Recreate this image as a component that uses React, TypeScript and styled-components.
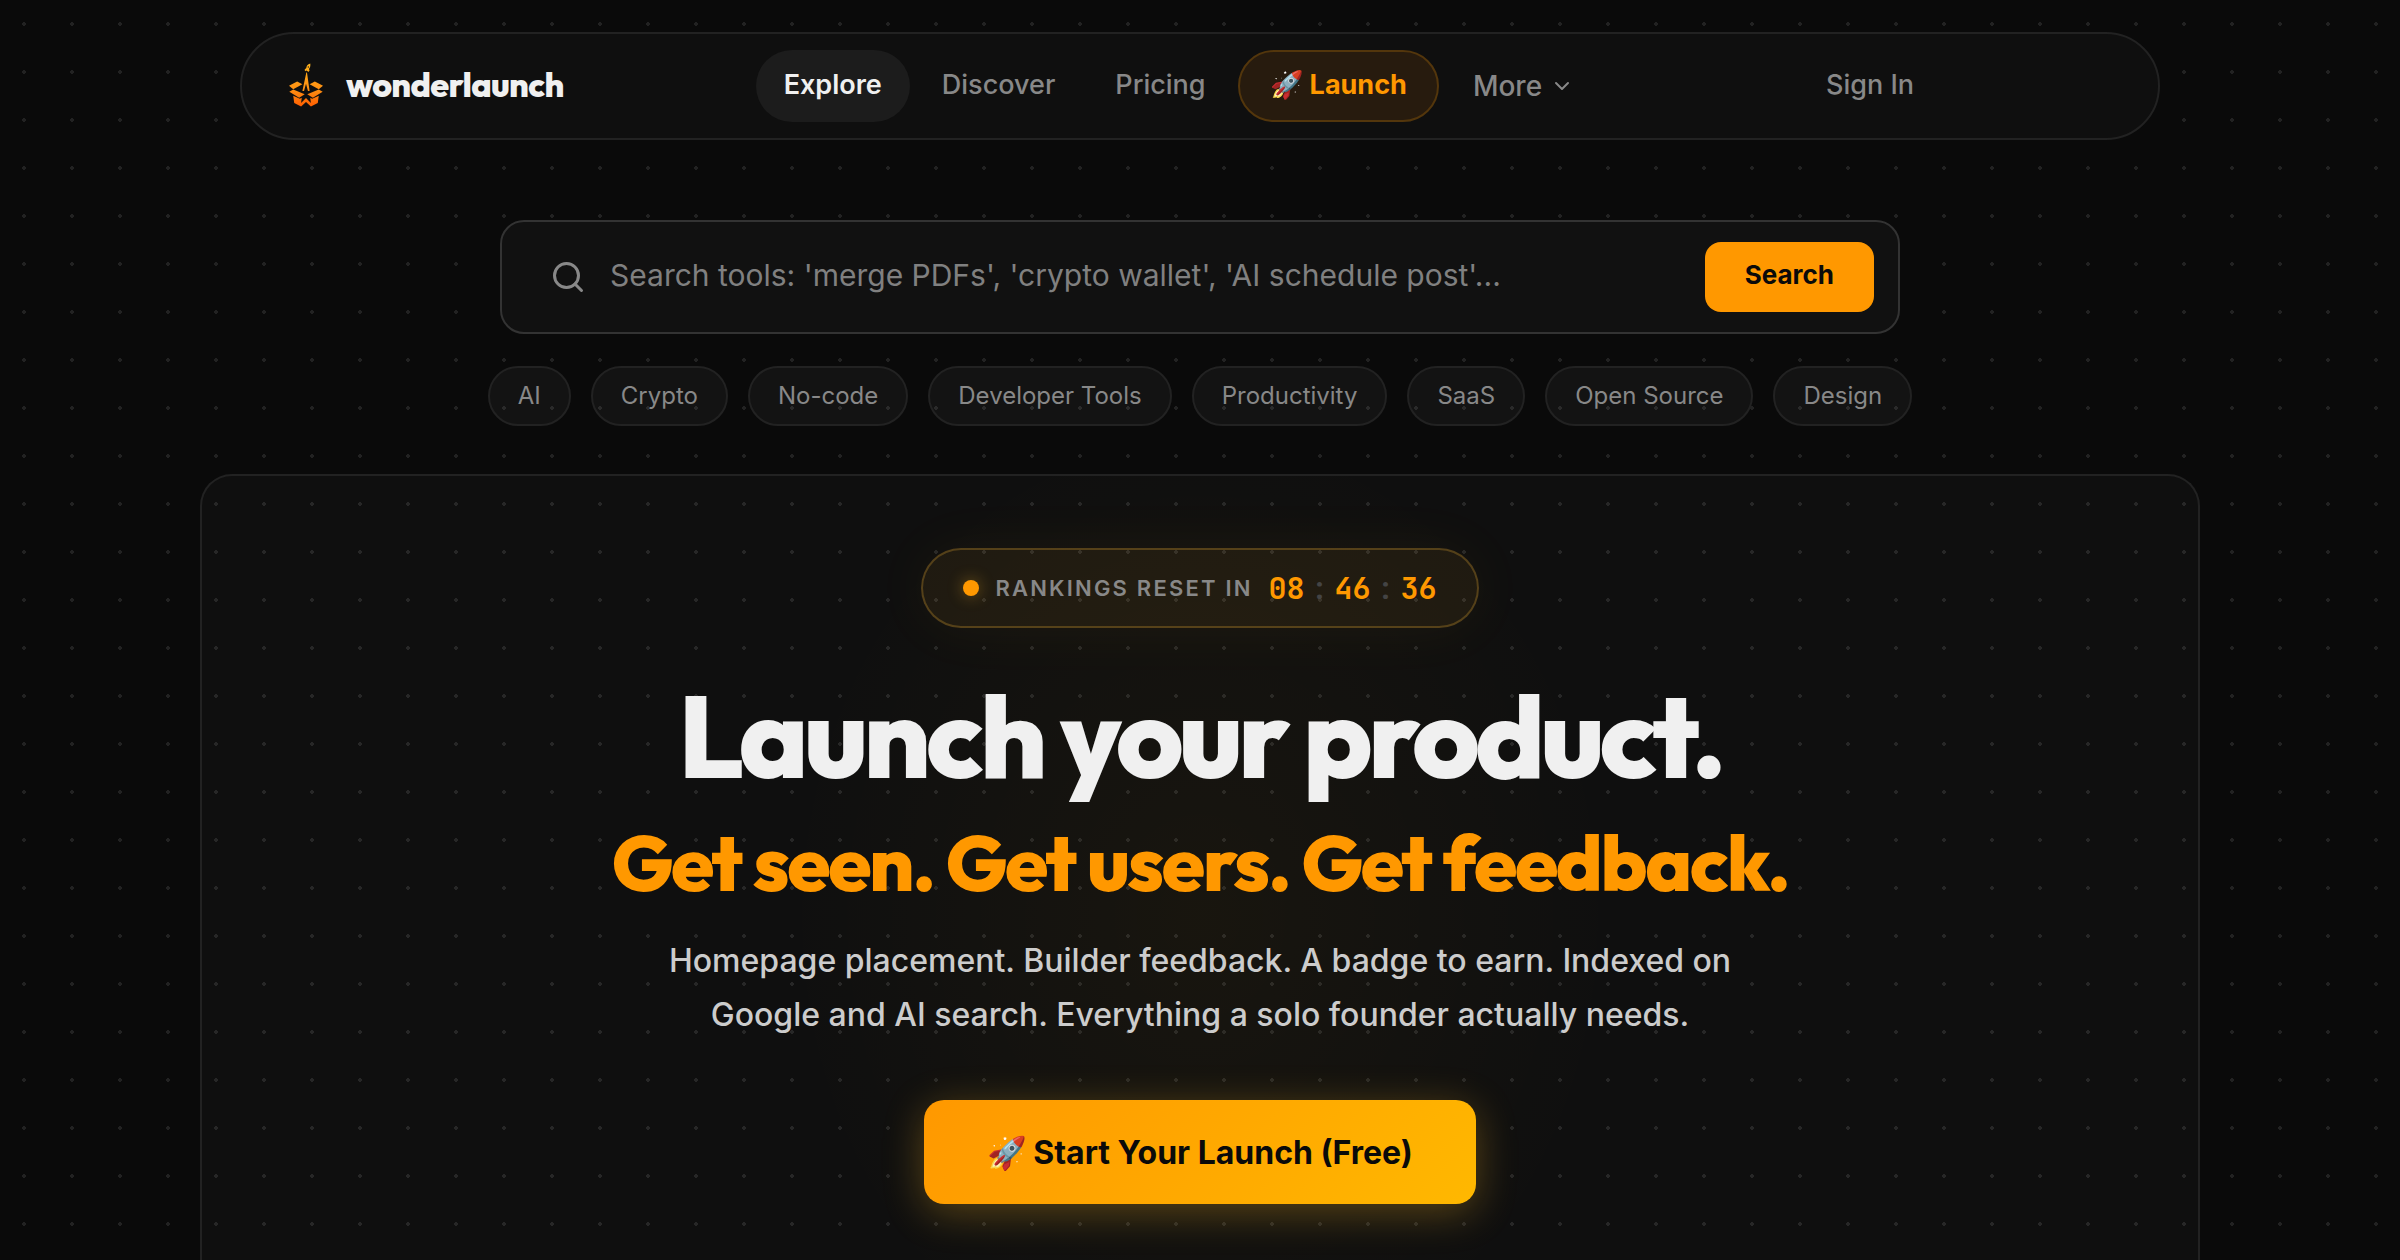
import React from "react";
import styled, { createGlobalStyle, css } from "styled-components";
import { ChevronDown, Search } from "lucide-react";

const sans = `Inter, "Liberation Sans", sans-serif`;
const display = `Outfit, Lato, "Liberation Sans", sans-serif`;
const mono = `"JetBrains Mono", "DejaVu Sans Mono", monospace`;

const GlobalStyle = createGlobalStyle`
  *, *::before, *::after { box-sizing: border-box; }
  html { background: #0a0a0a; }
  body {
    margin: 0;
    min-height: 100vh;
    color: #f0f0f0;
    font-family: ${sans};
    background-color: #0a0a0a;
    background-image: radial-gradient(circle, #222 2px, transparent 2px);
    background-size: 48px 48px;
    overflow: hidden;
  }
  button, input { font: inherit; }
`;

const Page = styled.div`
  height: 100vh;
  padding: 32px 24px 0;
  display: flex;
  flex-direction: column;
  align-items: center;
  overflow: hidden;
`;

const Nav = styled.nav`
  flex: none;
  width: 100%;
  max-width: 1920px;
  height: 108px;
  padding: 0 34px 0 46px;
  display: flex;
  align-items: center;
  justify-content: space-between;
  border: 2px solid #222;
  border-radius: 54px;
  background: #0f0f0f;
`;

const Brand = styled.a`
  padding-bottom: 2px;
  display: flex;
  align-items: center;
  gap: 22px;
  color: #f0f0f0;
  text-decoration: none;
  font: 800 34px/44px ${display};
  letter-spacing: -0.02em;
`;

const NavLinks = styled.div`
  display: flex;
  align-items: center;
  gap: 4px;
`;

const navItem = css`
  height: 72px;
  padding: 0 26px;
  display: flex;
  align-items: center;
  border: 2px solid transparent;
  border-radius: 36px;
  font: 500 27px/40px ${sans};
  color: #888;
  text-decoration: none;
`;

const NavLink = styled.a<{ $tone?: "active" | "launch" }>`
  ${navItem}
  padding-bottom: 2px;
  ${(p) =>
    p.$tone === "active" &&
    css`
      color: #f0f0f0;
      font-weight: 600;
      background: #1c1c1c;
    `}
  ${(p) =>
    p.$tone === "launch" &&
    css`
      padding-left: 30px;
      padding-right: 30px;
      gap: 6px;
      color: #ff9800;
      font-weight: 700;
      background: #271b0e;
      border-color: #53360c;
    `}
`;

const MoreButton = styled.button`
  ${navItem}
  padding: 0 30px 0 28px;
  gap: 8px;
  font-size: 28px;
  background: none;
  cursor: pointer;
`;

const Actions = styled.div`
  width: 326px;
  display: flex;
`;

const SearchForm = styled.form`
  flex: none;
  width: 100%;
  max-width: 1400px;
  height: 114px;
  margin-top: 80px;
  padding: 0 24px 0 48px;
  display: flex;
  align-items: center;
  gap: 24px;
  border: 2px solid #333;
  border-radius: 24px;
  background: #111;
  color: #888;
`;

const SearchInput = styled.input`
  flex: 1;
  min-width: 0;
  height: 72px;
  padding: 0 0 4px;
  border: 0;
  outline: 0;
  background: none;
  color: #f0f0f0;
  font-size: 30px;
  &::placeholder { color: #808080; opacity: 1; }
`;

const SearchButton = styled.button`
  height: 70px;
  padding: 0 40px 6px;
  border: 0;
  border-radius: 16px;
  background: #ff9800;
  color: #0a0a0a;
  font-size: 26px;
  font-weight: 700;
  cursor: pointer;
`;

const Chips = styled.div`
  flex: none;
  margin-top: 32px;
  display: flex;
  justify-content: center;
  gap: 20px;
`;

const Chip = styled.button`
  height: 60px;
  padding: 0 28px 2px;
  border: 2px solid #222;
  border-radius: 30px;
  background: rgba(255, 255, 255, 0.04);
  color: #888;
  font-size: 24px;
  cursor: pointer;
`;

const Hero = styled.main`
  flex: 1 0 auto;
  width: 100%;
  max-width: 2000px;
  margin-top: 48px;
  padding: 72px 40px 96px;
  display: flex;
  flex-direction: column;
  align-items: center;
  border: 2px solid #222;
  border-bottom: 0;
  border-radius: 32px 32px 0 0;
  background:
    radial-gradient(ellipse 420px 500px at 50% 440px, rgba(255, 180, 0, 0.04), transparent),
    rgba(255, 255, 255, 0.024);
  text-align: center;
`;

const Countdown = styled.div`
  height: 80px;
  padding: 0 40px;
  display: flex;
  align-items: center;
  gap: 16px;
  border: 2px solid rgba(255, 190, 50, 0.24);
  border-radius: 40px;
  background: rgba(255, 190, 50, 0.07);
  box-shadow: 0 0 60px rgba(255, 190, 50, 0.05);
`;

const Pulse = styled.span`
  width: 16px;
  height: 16px;
  border-radius: 50%;
  background: #ff9800;
  box-shadow: 0 0 16px rgba(255, 184, 40, 0.4);
`;

const CountdownLabel = styled.span`
  color: #888;
  font-size: 22px;
  font-weight: 600;
  letter-spacing: 0.1em;
`;

const Clock = styled.time`
  display: flex;
  gap: 6px;
  color: #ff9800;
  font: 700 30px/40px ${mono};
`;

const Colon = styled.span`
  color: #444;
  font-weight: 400;
`;

const Title = styled.h1`
  margin: 44px 0 0;
  font: 800 116px/126px ${display};
  letter-spacing: -0.04em;
`;

const Tagline = styled.p`
  margin: 16px 0 0;
  color: #ff9800;
  font: 800 78px/96px ${display};
  letter-spacing: -0.03em;
`;

const Blurb = styled.p`
  max-width: 1120px;
  margin: 24px 0 0;
  color: #ccc;
  font: 500 32px/54px ${sans};
`;

const StartButton = styled.button`
  height: 104px;
  margin-top: 58px;
  padding: 0 63px;
  display: flex;
  align-items: center;
  gap: 6px;
  border: 0;
  border-radius: 20px;
  background: linear-gradient(135deg, #ff9800, #ffb800);
  color: #0a0a0a;
  font-size: 32px;
  font-weight: 700;
  box-shadow: 0 8px 40px rgba(255, 184, 40, 0.3);
  cursor: pointer;
`;

const BrandMark = () => (
  <svg width="36" height="46" viewBox="24 38 110 140" aria-hidden="true">
    <defs>
      <linearGradient id="flame" x1="0" y1="38" x2="0" y2="178" gradientUnits="userSpaceOnUse">
        <stop offset="0" stopColor="#ffb51c" />
        <stop offset="0.6" stopColor="#ff8f12" />
        <stop offset="1" stopColor="#ff5a00" />
      </linearGradient>
    </defs>
    <g fill="url(#flame)">
      <path d="M92 42 C84 44 80 50 80 56 L75 61 L76 66 L80 64 L84 66 L86 68 L90 64 L88 59 C92 54 93 48 92 42 Z" />
      <path d="M80 70 L68 126 L73 126 L79 104 L85 126 L90 126 L82 70 Z" />
      <path d="M27 110 L52 97 L68 106 L40 121 Z" />
      <path d="M131 110 L106 97 L90 106 L118 121 Z" />
      <path d="M28 129 L40 122 L75 136 L58 147 Z" />
      <path d="M130 129 L118 122 L83 136 L100 147 Z" />
      <path d="M40 141 L60 150 L66 147 L64 163 L79 148 L94 163 L92 147 L98 150 L118 141 L115 163 L94 174 L79 160 L64 174 L43 163 Z" />
    </g>
    <circle cx="86" cy="53" r="2" fill="#0f0f0f" />
  </svg>
);

const topics = [
  "AI",
  "Crypto",
  "No-code",
  "Developer Tools",
  "Productivity",
  "SaaS",
  "Open Source",
  "Design",
];

export default function App() {
  return (
    <>
      <GlobalStyle />
      <Page>
        <Nav aria-label="Main">
          <Brand href="#">
            <BrandMark />
            wonderlaunch
          </Brand>
          <NavLinks>
            <NavLink href="#explore" $tone="active">Explore</NavLink>
            <NavLink href="#discover">Discover</NavLink>
            <NavLink href="#pricing">Pricing</NavLink>
            <NavLink href="#launch" $tone="launch"><span>🚀</span>Launch</NavLink>
            <MoreButton type="button">
              More
              <ChevronDown size={24} />
            </MoreButton>
          </NavLinks>
          <Actions>
            <NavLink href="#sign-in">Sign In</NavLink>
          </Actions>
        </Nav>

        <SearchForm role="search" onSubmit={(e) => e.preventDefault()}>
          <Search size={36} aria-hidden="true" />
          <SearchInput
            type="text"
            aria-label="Search tools"
            placeholder="Search tools: 'merge PDFs', 'crypto wallet', 'AI schedule post'..."
          />
          <SearchButton type="submit">Search</SearchButton>
        </SearchForm>

        <Chips>
          {topics.map((topic) => (
            <Chip key={topic} type="button">{topic}</Chip>
          ))}
        </Chips>

        <Hero>
          <Countdown>
            <Pulse />
            <CountdownLabel>RANKINGS RESET IN</CountdownLabel>
            <Clock>
              <span>08</span>
              <Colon>:</Colon>
              <span>46</span>
              <Colon>:</Colon>
              <span>36</span>
            </Clock>
          </Countdown>
          <Title>Launch your product.</Title>
          <Tagline>Get seen. Get users. Get feedback.</Tagline>
          <Blurb>
            Homepage placement. Builder feedback. A badge to earn. Indexed on Google and AI search.
            Everything a solo founder actually needs.
          </Blurb>
          <StartButton type="button"><span>🚀</span>Start Your Launch (Free)</StartButton>
        </Hero>
      </Page>
    </>
  );
}
